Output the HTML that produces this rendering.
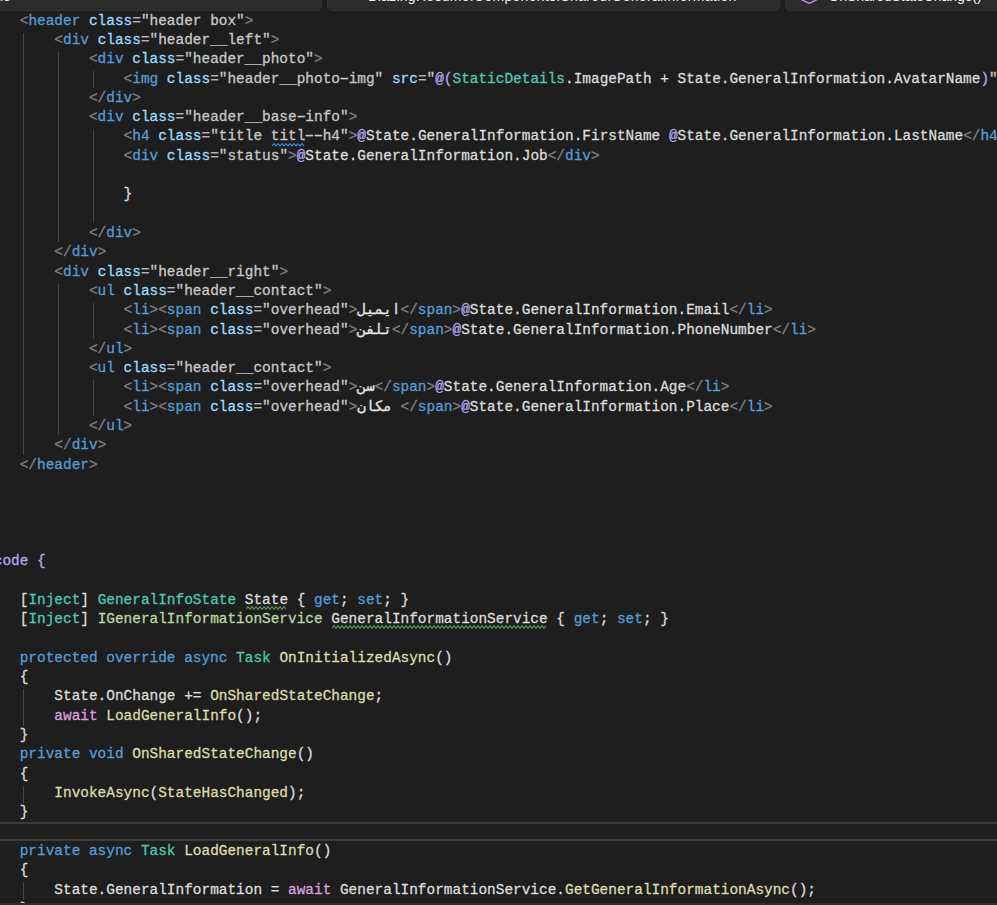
<!DOCTYPE html>
<html>
<head>
<meta charset="utf-8">
<title>Editor</title>
<style>
html,body{margin:0;padding:0;background:#1e1e1e;}
body{width:997px;height:905px;overflow:hidden;position:relative;font-family:"Liberation Mono",monospace;}
#ed{position:absolute;left:0;top:0;width:997px;height:905px;overflow:hidden;background:#1e1e1e;}
.ln{position:absolute;left:-14.92px;height:19.310px;line-height:19.310px;white-space:pre;font-size:14.43px;color:#dcdcdc;font-family:"Liberation Mono",monospace;-webkit-text-stroke:0.29px currentColor;}
.d{color:#808080}.e{color:#569cd6}.a{color:#9cdcfe}.o{color:#b4b4b4}.v{color:#c8c8c8}
.r{color:#b5a6f3}.t{color:#4ec9b0}.n{color:#b8d7a3}.i{color:#dcdcdc}.k{color:#569cd6}.c{color:#d8a0df}.m{color:#dcdcaa}
.hy{display:inline-block;transform:scaleX(1.75);}
.ar{display:inline-block;color:#e4e4e4;text-align:center;direction:rtl;unicode-bidi:isolate;white-space:nowrap;overflow:visible;height:19.310px;line-height:19.310px;vertical-align:top;font-family:"Liberation Mono","DejaVu Sans Mono",monospace;font-size:14.43px;}
.sq{position:absolute;overflow:hidden;}
.g{position:absolute;width:1px;background:#484848;}
#bot{position:absolute;left:0;bottom:0;width:997px;height:2px;background:#2d2d2d;}
#nav{position:absolute;left:0;top:0;width:997px;height:14px;overflow:hidden;}
.dd{position:absolute;top:-12px;height:23px;box-sizing:border-box;background:#2b2b2b;border:1px solid #323232;border-radius:5px;overflow:hidden;}
.dd span{position:absolute;top:-1.1px;line-height:16px;font:14px/16px "Liberation Sans",sans-serif;color:#f0f0f0;white-space:pre;}
#cur{position:absolute;left:0;width:997px;top:822px;height:19px;border-top:2px solid #3b3b3b;border-bottom:2px solid #3b3b3b;box-sizing:border-box;}
</style>
</head>
<body>
<div id="ed">
<div class="g" style="left:23.3px;top:32.8px;height:421.8px"></div>
<div class="g" style="left:57.9px;top:52.1px;height:190.1px"></div>
<div class="g" style="left:92.5px;top:71.4px;height:16.3px"></div>
<div class="g" style="left:92.5px;top:129.4px;height:93.6px"></div>
<div class="g" style="left:57.9px;top:283.8px;height:151.5px"></div>
<div class="g" style="left:92.5px;top:303.1px;height:35.6px"></div>
<div class="g" style="left:92.5px;top:380.4px;height:35.6px"></div>
<div class="g" style="left:23.3px;top:689.3px;height:36.8px"></div>
<div class="g" style="left:23.3px;top:785.9px;height:17.5px"></div>
<div class="g" style="left:23.3px;top:882.4px;height:17.5px"></div>
<div id="cur"></div>
<svg class="sq" style="left:272px;top:142.7px" width="33" height="5" viewBox="0 0 33 5"><path d="M0 2.9 L2 0.6 L4 2.9 L6 0.6 L8 2.9 L10 0.6 L12 2.9 L14 0.6 L16 2.9 L18 0.6 L20 2.9 L22 0.6 L24 2.9 L26 0.6 L28 2.9 L30 0.6 L32 2.9" fill="none" stroke="#3d8fe0" stroke-width="1.05"/></svg>
<svg class="sq" style="left:246px;top:606.0px" width="41" height="5" viewBox="0 0 41 5"><path d="M0 3.3 L2 0.6 L4 3.3 L6 0.6 L8 3.3 L10 0.6 L12 3.3 L14 0.6 L16 3.3 L18 0.6 L20 3.3 L22 0.6 L24 3.3 L26 0.6 L28 3.3 L30 0.6 L32 3.3 L34 0.6 L36 3.3 L38 0.6 L40 3.3" fill="none" stroke="#4f9a4f" stroke-width="1.05"/></svg>
<svg class="sq" style="left:332px;top:625.3px" width="215" height="5" viewBox="0 0 215 5"><path d="M0 3.3 L2 0.6 L4 3.3 L6 0.6 L8 3.3 L10 0.6 L12 3.3 L14 0.6 L16 3.3 L18 0.6 L20 3.3 L22 0.6 L24 3.3 L26 0.6 L28 3.3 L30 0.6 L32 3.3 L34 0.6 L36 3.3 L38 0.6 L40 3.3 L42 0.6 L44 3.3 L46 0.6 L48 3.3 L50 0.6 L52 3.3 L54 0.6 L56 3.3 L58 0.6 L60 3.3 L62 0.6 L64 3.3 L66 0.6 L68 3.3 L70 0.6 L72 3.3 L74 0.6 L76 3.3 L78 0.6 L80 3.3 L82 0.6 L84 3.3 L86 0.6 L88 3.3 L90 0.6 L92 3.3 L94 0.6 L96 3.3 L98 0.6 L100 3.3 L102 0.6 L104 3.3 L106 0.6 L108 3.3 L110 0.6 L112 3.3 L114 0.6 L116 3.3 L118 0.6 L120 3.3 L122 0.6 L124 3.3 L126 0.6 L128 3.3 L130 0.6 L132 3.3 L134 0.6 L136 3.3 L138 0.6 L140 3.3 L142 0.6 L144 3.3 L146 0.6 L148 3.3 L150 0.6 L152 3.3 L154 0.6 L156 3.3 L158 0.6 L160 3.3 L162 0.6 L164 3.3 L166 0.6 L168 3.3 L170 0.6 L172 3.3 L174 0.6 L176 3.3 L178 0.6 L180 3.3 L182 0.6 L184 3.3 L186 0.6 L188 3.3 L190 0.6 L192 3.3 L194 0.6 L196 3.3 L198 0.6 L200 3.3 L202 0.6 L204 3.3 L206 0.6 L208 3.3 L210 0.6 L212 3.3 L214 0.6" fill="none" stroke="#4f9a4f" stroke-width="1.05"/></svg>
<div class="ln" style="top:11.60px">    <span class="d">&lt;</span><span class="e">header</span> <span class="a">class</span><span class="o">=</span><span class="v">"header box"</span><span class="d">&gt;</span></div>
<div class="ln" style="top:30.91px">        <span class="d">&lt;</span><span class="e">div</span> <span class="a">class</span><span class="o">=</span><span class="v">"header__left"</span><span class="d">&gt;</span></div>
<div class="ln" style="top:50.22px">            <span class="d">&lt;</span><span class="e">div</span> <span class="a">class</span><span class="o">=</span><span class="v">"header__photo"</span><span class="d">&gt;</span></div>
<div class="ln" style="top:69.53px">                <span class="d">&lt;</span><span class="e">img</span> <span class="a">class</span><span class="o">=</span><span class="v">"header__photo<span class="hy">-</span>img"</span> <span class="a">src</span><span class="o">=</span><span class="v">"</span><span class="r">@(</span><span class="t">StaticDetails</span><span class="i">.ImagePath + State.GeneralInformation.AvatarName</span><span class="r">)</span><span class="v">"</span></div>
<div class="ln" style="top:88.84px">            <span class="d">&lt;/</span><span class="e">div</span><span class="d">&gt;</span></div>
<div class="ln" style="top:108.15px">            <span class="d">&lt;</span><span class="e">div</span> <span class="a">class</span><span class="o">=</span><span class="v">"header__base<span class="hy">-</span>info"</span><span class="d">&gt;</span></div>
<div class="ln" style="top:127.46px">                <span class="d">&lt;</span><span class="e">h4</span> <span class="a">class</span><span class="o">=</span><span class="v">"title </span><span class="v sqb">titl</span><span class="v"><span class="hy">-</span><span class="hy">-</span>h4"</span><span class="d">&gt;</span><span class="r">@</span><span class="i">State.GeneralInformation.FirstName</span> <span class="r">@</span><span class="i">State.GeneralInformation.LastName</span><span class="d">&lt;/</span><span class="e">h4</span></div>
<div class="ln" style="top:146.77px">                <span class="d">&lt;</span><span class="e">div</span> <span class="a">class</span><span class="o">=</span><span class="v">"status"</span><span class="d">&gt;</span><span class="r">@</span><span class="i">State.GeneralInformation.Job</span><span class="d">&lt;/</span><span class="e">div</span><span class="d">&gt;</span></div>
<div class="ln" style="top:166.08px"></div>
<div class="ln" style="top:185.39px">                <span class="i">}</span></div>
<div class="ln" style="top:204.70px"></div>
<div class="ln" style="top:224.01px">            <span class="d">&lt;/</span><span class="e">div</span><span class="d">&gt;</span></div>
<div class="ln" style="top:243.32px">        <span class="d">&lt;/</span><span class="e">div</span><span class="d">&gt;</span></div>
<div class="ln" style="top:262.63px">        <span class="d">&lt;</span><span class="e">div</span> <span class="a">class</span><span class="o">=</span><span class="v">"header__right"</span><span class="d">&gt;</span></div>
<div class="ln" style="top:281.94px">            <span class="d">&lt;</span><span class="e">ul</span> <span class="a">class</span><span class="o">=</span><span class="v">"header__contact"</span><span class="d">&gt;</span></div>
<div class="ln" style="top:301.25px">                <span class="d">&lt;</span><span class="e">li</span><span class="d">&gt;</span><span class="d">&lt;</span><span class="e">span</span> <span class="a">class</span><span class="o">=</span><span class="v">"overhead"</span><span class="d">&gt;</span><span class="ar" style="width:43.273px">ایمیل</span><span class="d">&lt;/</span><span class="e">span</span><span class="d">&gt;</span><span class="r">@</span><span class="i">State.GeneralInformation.Email</span><span class="d">&lt;/</span><span class="e">li</span><span class="d">&gt;</span></div>
<div class="ln" style="top:320.56px">                <span class="d">&lt;</span><span class="e">li</span><span class="d">&gt;</span><span class="d">&lt;</span><span class="e">span</span> <span class="a">class</span><span class="o">=</span><span class="v">"overhead"</span><span class="d">&gt;</span><span class="ar" style="width:34.619px">تلفن</span><span class="d">&lt;/</span><span class="e">span</span><span class="d">&gt;</span><span class="r">@</span><span class="i">State.GeneralInformation.PhoneNumber</span><span class="d">&lt;/</span><span class="e">li</span><span class="d">&gt;</span></div>
<div class="ln" style="top:339.87px">            <span class="d">&lt;/</span><span class="e">ul</span><span class="d">&gt;</span></div>
<div class="ln" style="top:359.18px">            <span class="d">&lt;</span><span class="e">ul</span> <span class="a">class</span><span class="o">=</span><span class="v">"header__contact"</span><span class="d">&gt;</span></div>
<div class="ln" style="top:378.49px">                <span class="d">&lt;</span><span class="e">li</span><span class="d">&gt;</span><span class="d">&lt;</span><span class="e">span</span> <span class="a">class</span><span class="o">=</span><span class="v">"overhead"</span><span class="d">&gt;</span><span class="ar" style="width:17.309px">سن</span><span class="d">&lt;/</span><span class="e">span</span><span class="d">&gt;</span><span class="r">@</span><span class="i">State.GeneralInformation.Age</span><span class="d">&lt;/</span><span class="e">li</span><span class="d">&gt;</span></div>
<div class="ln" style="top:397.80px">                <span class="d">&lt;</span><span class="e">li</span><span class="d">&gt;</span><span class="d">&lt;</span><span class="e">span</span> <span class="a">class</span><span class="o">=</span><span class="v">"overhead"</span><span class="d">&gt;</span><span class="ar" style="width:34.619px">مکان</span> <span class="d">&lt;/</span><span class="e">span</span><span class="d">&gt;</span><span class="r">@</span><span class="i">State.GeneralInformation.Place</span><span class="d">&lt;/</span><span class="e">li</span><span class="d">&gt;</span></div>
<div class="ln" style="top:417.11px">            <span class="d">&lt;/</span><span class="e">ul</span><span class="d">&gt;</span></div>
<div class="ln" style="top:436.42px">        <span class="d">&lt;/</span><span class="e">div</span><span class="d">&gt;</span></div>
<div class="ln" style="top:455.73px">    <span class="d">&lt;/</span><span class="e">header</span><span class="d">&gt;</span></div>
<div class="ln" style="top:475.04px"></div>
<div class="ln" style="top:494.35px"></div>
<div class="ln" style="top:513.66px"></div>
<div class="ln" style="top:532.97px"></div>
<div class="ln" style="top:552.28px"><span class="r">@code {</span></div>
<div class="ln" style="top:571.59px"></div>
<div class="ln" style="top:590.90px">    <span class="i">[</span><span class="t">Inject</span><span class="i">] </span><span class="t">GeneralInfoState</span> <span class="i sqg">State</span><span class="i"> { </span><span class="k">get</span><span class="i">; </span><span class="k">set</span><span class="i">; }</span></div>
<div class="ln" style="top:610.21px">    <span class="i">[</span><span class="t">Inject</span><span class="i">] </span><span class="n">IGeneralInformationService</span> <span class="i sqg">GeneralInformationService</span><span class="i"> { </span><span class="k">get</span><span class="i">; </span><span class="k">set</span><span class="i">; }</span></div>
<div class="ln" style="top:629.52px"></div>
<div class="ln" style="top:648.83px">    <span class="k">protected override async</span> <span class="t">Task</span> <span class="m">OnInitializedAsync</span><span class="i">()</span></div>
<div class="ln" style="top:668.14px">    <span class="i">{</span></div>
<div class="ln" style="top:687.45px">        <span class="i">State.OnChange += </span><span class="m">OnSharedStateChange</span><span class="i">;</span></div>
<div class="ln" style="top:706.76px">        <span class="c">await</span> <span class="m">LoadGeneralInfo</span><span class="i">();</span></div>
<div class="ln" style="top:726.07px">    <span class="i">}</span></div>
<div class="ln" style="top:745.38px">    <span class="k">private void</span> <span class="m">OnSharedStateChange</span><span class="i">()</span></div>
<div class="ln" style="top:764.69px">    <span class="i">{</span></div>
<div class="ln" style="top:784.00px">        <span class="m">InvokeAsync</span><span class="i">(</span><span class="m">StateHasChanged</span><span class="i">);</span></div>
<div class="ln" style="top:803.31px">    <span class="i">}</span></div>
<div class="ln" style="top:822.62px"></div>
<div class="ln" style="top:841.93px">    <span class="k">private async</span> <span class="t">Task</span> <span class="m">LoadGeneralInfo</span><span class="i">()</span></div>
<div class="ln" style="top:861.24px">    <span class="i">{</span></div>
<div class="ln" style="top:880.55px">        <span class="i">State.GeneralInformation = </span><span class="c">await</span><span class="i"> GeneralInformationService.</span><span class="m">GetGeneralInformationAsync</span><span class="i">();</span></div>
<div class="ln" style="top:899.86px">    <span class="i">}</span></div>
<div id="bot"></div>
<div id="nav">
<div class="dd" style="left:-10px;width:332px"><span style="right:310.3px">BlazingResume</span></div>
<div class="dd" style="left:327px;width:453px"><span style="left:40px;letter-spacing:0.29px">BlazingResume.Components.Shared.GeneralInformation</span></div>
<div class="dd" style="left:785px;width:230px"><span style="left:42.5px;letter-spacing:-0.09px">OnSharedStateChange()</span>
<svg style="position:absolute;left:13px;top:11px" width="22" height="8" viewBox="0 0 22 8"><path d="M1.6 -0.8 L10.2 3.4 L18.8 -0.8" fill="none" stroke="#b58be0" stroke-width="1.5" stroke-linejoin="round"/></svg></div>
</div>
</div>
</body>
</html>
